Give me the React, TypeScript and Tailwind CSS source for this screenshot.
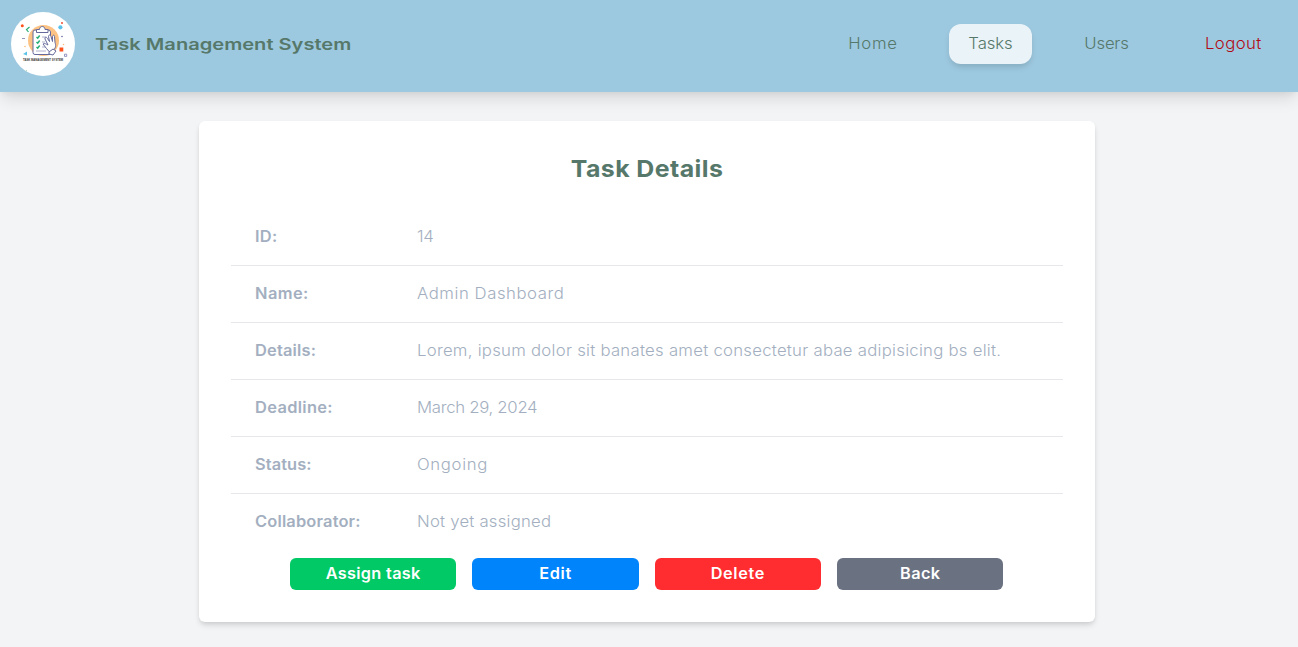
import React from "react";

function Logo() {
  return (
    <svg viewBox="0 0 64 64" className="size-16 shrink-0 rounded-full bg-white" fill="none" aria-hidden="true">
      <circle cx="32.500" cy="28.500" r="15.500" fill="#fdc384" />
      <path d="M22 18.500h17.500v23.500H22z" fill="#fff" />
      <path d="M26.500 18H24a2 2 0 0 0-2 2v20.500a2 2 0 0 0 2 2h15M35 18h2.500a2 2 0 0 1 2 2v6" stroke="#65699b" strokeWidth="1" />
      <path d="M25.500 20.500v-3h3c0-4 5.500-4 5.500 0h3v3z" fill="#fff" stroke="#65699b" strokeWidth="1" />
      <path d="M25.500 25l1.200 1.200 2-2.700M25.500 30l1.200 1.200 2-2.700M25.500 35l1.200 1.200 2-2.700" stroke="#27ad75" strokeWidth="1.500" />
      <path d="M31 25h4M31 30h3M31 35h3M25 39h10" stroke="#9a9cc0" strokeWidth=".8" />
      <path d="M32 32c2-1 3 0 5 1l-3-6c-.5-2 1.500-2.500 2.500-.5l2 3-1-5c0-2 2-2 2.500 0l1.500 5v-5c.5-2 2-1.500 2 0l.5 6c1 3 1 5-1.500 7.500l-4 2-3-3.500z" fill="#fff" stroke="#65699b" strokeWidth="1" strokeLinejoin="round" />
      <path d="M38 40l4-3 3 2-3 4-4-1z" fill="#fff" stroke="#65699b" strokeWidth="1" />
      <circle cx="11.300" cy="13.700" r="1.500" fill="#ff521d" />
      <circle cx="51" cy="11" r="1.100" fill="#f25b43" />
      <circle cx="49.400" cy="15.300" r="2.100" fill="#5bc2ea" />
      <path d="M18.500 15l-3 2.500 2 2.500" stroke="#27ad75" strokeWidth="1.200" />
      <path d="M11 26.500h3" stroke="#777aa8" strokeWidth=".8" />
      <circle cx="51" cy="24.500" r=".8" fill="#6266a1" />
      <circle cx="14" cy="34.500" r=".8" fill="#fdbd79" />
      <circle cx="52.500" cy="32.500" r=".8" fill="#fdbd79" />
      <path d="M12 42l4-2.500v4z" fill="#5bc2ea" />
      <path d="M48.500 35.500h3.800v4h-3.800z" fill="#ff521d" />
      <path d="M53.500 42.200h2.200v2.200h-2.200z" stroke="#7b80b4" strokeWidth=".8" />
      <circle cx="15.300" cy="58.800" r=".6" fill="#65bc8b" />
      <text x="12" y="48.800" textLength="40" lengthAdjust="spacingAndGlyphs" fontFamily="Liberation Sans, sans-serif" fontSize="3.600" fontWeight="700" fill="#343434">TASK MANAGEMENT SYSTEM</text>
    </svg>
  );
}

const rows = [
  { label: "ID:", value: "14", labelFit: "tracking-[0.3px]", valueFit: "tracking-[-0.3px]" },
  { label: "Name:", value: "Admin Dashboard", labelFit: "tracking-[0.4px]", valueFit: "tracking-[0.5px]" },
  { label: "Details:", value: "Lorem, ipsum dolor sit banates amet consectetur abae adipisicing bs elit.", labelFit: "tracking-[0.15px]", valueFit: "tracking-[0.24px]" },
  { label: "Deadline:", value: "March 29, 2024", labelFit: "tracking-[0.3px]", valueFit: "tracking-[-0.27px]" },
  { label: "Status:", value: "Ongoing", labelFit: "tracking-[0.05px]", valueFit: "tracking-[0.6px]" },
  { label: "Collaborator:", value: "Not yet assigned", labelFit: "tracking-[0.15px]", valueFit: "tracking-[0.2px]" },
];

const actions = [
  { label: "Assign task", fill: "bg-[#00c966]", fit: "tracking-[0.3px]" },
  { label: "Edit", fill: "bg-[#0084fb]", fit: "tracking-[0.6px]" },
  { label: "Delete", fill: "bg-[#ff2d30]", fit: "tracking-[0.6px]" },
  { label: "Back", fill: "bg-[#6a7282]", fit: "tracking-[0.4px]" },
];

export default function App() {
  return (
    <div className="flex h-[647px] flex-col overflow-hidden bg-[#f3f4f6] font-['Inter',sans-serif] text-[15.5px]">
      <header className="flex h-[92px] shrink-0 items-start bg-[#9dc9e0] pt-3 pr-4 pl-[11px] text-[#56786a] shadow-[0_10px_15px_-3px_rgba(0,0,0,0.11),0_4px_6px_-2px_rgba(0,0,0,0.05)]">
        <Logo />
        <div className="ml-5 flex h-16 w-[260px] items-center">
          <span className="origin-left scale-x-[1.255] text-[16px] font-semibold whitespace-nowrap">Task Management System</span>
        </div>
        <nav className="mt-3 ml-auto flex h-10 items-center gap-8 font-light">
          <a className="flex h-10 w-[89px] items-center justify-center"><span className="scale-x-[1.08] tracking-[0.7px]">Home</span></a>
          <a className="flex h-10 w-[83px] items-center justify-center rounded-xl bg-[#eaf3f8] shadow-[0_4px_6px_-1px_rgba(0,0,0,0.14)]"><span className="scale-x-[1.08] tracking-[-0.1px]">Tasks</span></a>
          <a className="flex h-10 w-[85px] items-center justify-center"><span className="scale-x-[1.08] tracking-[-0.2px]">Users</span></a>
          <a className="ml-1 flex h-10 w-[97px] items-center justify-center text-[#b20914]"><span className="scale-x-[1.08] tracking-[0.4px]">Logout</span></a>
        </nav>
      </header>
      <main className="mt-[29px] ml-[199px] h-[501px] w-[896px] rounded-md bg-white px-8 pt-8 shadow-[0_4px_6px_-1px_rgba(0,0,0,0.12),0_2px_4px_-1px_rgba(0,0,0,0.08)]">
        <h1 className="h-8 scale-x-[1.06] text-center text-[23.5px] leading-8 font-bold tracking-[0.4px] text-[#56786a]">Task Details</h1>
        <dl className="mt-6 divide-y divide-gray-200">
          {rows.map((row) => (
            <div key={row.label} className="flex h-[57px] items-center px-6 text-[#a3afc0] last:h-14">
              <dt className={`w-[162px] origin-left scale-x-[1.06] font-semibold ${row.labelFit}`}>{row.label}</dt>
              <dd className={`origin-left scale-x-[1.08] font-light whitespace-nowrap ${row.valueFit}`}>{row.value}</dd>
            </div>
          ))}
        </dl>
        <div className="mt-2 ml-[59px] grid w-[713px] grid-cols-4 gap-4">
          {actions.map((action) => (
            <button key={action.label} className={`h-8 rounded-md font-semibold text-white ${action.fill}`}>
              <span className={`inline-block scale-x-[1.05] ${action.fit}`}>{action.label}</span>
            </button>
          ))}
        </div>
      </main>
    </div>
  );
}
